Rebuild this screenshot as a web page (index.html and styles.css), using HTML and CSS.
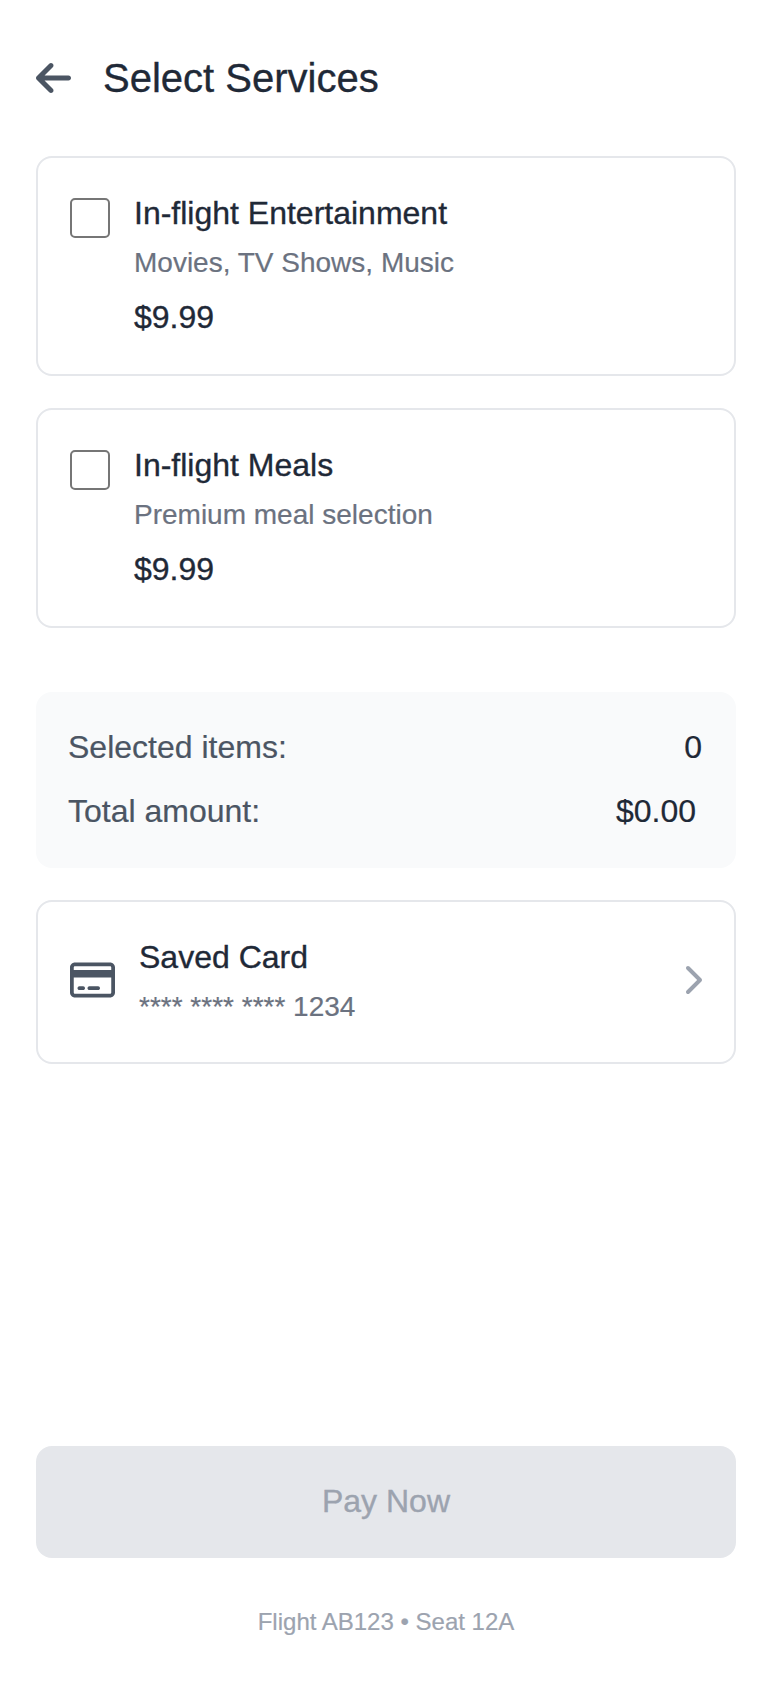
FILE: index.html
```html
<!DOCTYPE html>
<html lang="en">
<head>
<meta charset="utf-8">
<title>Select Services</title>
<link rel="stylesheet" href="styles.css">
</head>
<body>
<main class="screen">
  <header class="header">
    <svg class="icon-back" viewBox="0 0 448 512"><path d="M9.4 233.4c-12.5 12.5-12.5 32.8 0 45.3l160 160c12.5 12.5 32.8 12.5 45.3 0s12.5-32.8 0-45.3L109.2 288 416 288c17.7 0 32-14.3 32-32s-14.3-32-32-32l-306.7 0L214.6 118.6c12.5-12.5 12.5-32.8 0-45.3s-32.8-12.5-45.3 0l-160 160z"/></svg>
    <h1 class="heading">Select Services</h1>
  </header>
  <section class="services">
    <label class="card service">
      <input class="check" type="checkbox">
      <span class="info">
        <span class="title">In-flight Entertainment</span>
        <span class="sub">Movies, TV Shows, Music</span>
        <span class="price">$9.99</span>
      </span>
    </label>
    <label class="card service">
      <input class="check" type="checkbox">
      <span class="info">
        <span class="title">In-flight Meals</span>
        <span class="sub">Premium meal selection</span>
        <span class="price">$9.99</span>
      </span>
    </label>
  </section>
  <section class="summary">
    <div class="row"><span>Selected items:</span><span class="value count">0</span></div>
    <div class="row"><span>Total amount:</span><span class="value amount">$0.00</span></div>
  </section>
  <section class="card saved">
    <svg class="icon-card" viewBox="0 0 576 512"><path d="M512 80c8.8 0 16 7.2 16 16v32H48V96c0-8.8 7.2-16 16-16H512zm16 144V416c0 8.8-7.2 16-16 16H64c-8.8 0-16-7.2-16-16V224H528zM64 32C28.7 32 0 60.7 0 96V416c0 35.3 28.7 64 64 64H512c35.3 0 64-28.7 64-64V96c0-35.3-28.7-64-64-64H64zm56 304c-13.3 0-24 10.7-24 24s10.7 24 24 24h48c13.3 0 24-10.7 24-24s-10.7-24-24-24H120zm128 0c-13.3 0-24 10.7-24 24s10.7 24 24 24H360c13.3 0 24-10.7 24-24s-10.7-24-24-24H248z"/></svg>
    <div class="info">
      <span class="title">Saved Card</span>
      <span class="sub">**** **** **** 1234</span>
    </div>
    <svg class="icon-next" viewBox="0 0 320 512"><path d="M310.6 233.4c12.5 12.5 12.5 32.8 0 45.3l-192 192c-12.5 12.5-32.8 12.5-45.3 0s-12.5-32.8 0-45.3L242.7 256 73.4 86.6c-12.5-12.5-12.5-32.8 0-45.3s32.8-12.5 45.3 0l192 192z"/></svg>
  </section>
  <footer class="footer">
    <button class="pay" disabled>Pay Now</button>
    <p class="flight">Flight AB123 • Seat 12A</p>
  </footer>
</main>
</body>
</html>
```
FILE: styles.css
```css
* { box-sizing: border-box; }
body {
  margin: 0;
  background: #fff;
  color: #1f2937;
  font-family: "Liberation Sans", Arial, sans-serif;
  font-size: 32px;
  line-height: 46px;
  -webkit-text-stroke: 0.35px currentColor;
}
.screen {
  display: flex;
  flex-direction: column;
  width: 764px;
  height: 1682px;
  padding: 50px 28px 44px 36px;
}
.header { display: flex; align-items: center; gap: 32px; height: 56px; }
.icon-back { width: 35px; height: 40px; fill: #4b5563; }
.heading { margin: 0; font-size: 40px; font-weight: 400; line-height: 56px; }
.services { display: flex; flex-direction: column; gap: 32px; margin-top: 50px; }
.card { display: flex; width: 700px; border: 2px solid #e5e7eb; border-radius: 16px; }
.service { height: 220px; padding: 32px; gap: 24px; }
.check {
  appearance: none;
  flex: none;
  width: 40px;
  height: 40px;
  margin: 8px 0 0;
  border: 2px solid #767676;
  border-radius: 5px;
  background: #fff;
}
.info { display: flex; flex-direction: column; }
.sub {
  margin-top: 7px;
  color: #6b7280;
  font-size: 28px;
  line-height: 40px;
  -webkit-text-stroke: 0.2px #6b7280;
}
.price { margin-top: 11px; }
.summary {
  display: flex;
  flex-direction: column;
  gap: 18px;
  width: 700px;
  height: 176px;
  margin-top: 64px;
  padding: 32px;
  border-radius: 16px;
  background: #f9fafb;
  color: #4b5563;
  -webkit-text-stroke: 0.2px currentColor;
}
.row { display: flex; justify-content: space-between; }
.value { color: #1f2937; }
.count { margin-right: 2px; }
.amount { margin-right: 8px; }
.saved { align-items: center; height: 164px; margin-top: 32px; padding: 32px 32px 36px; }
.saved .sub { margin-bottom: -1px; }
.icon-card { width: 45px; height: 40px; margin-right: 24px; fill: #4b5563; }
.icon-next { width: 20px; height: 32px; margin-left: auto; fill: #9ca3af; }
.footer { width: 700px; margin-top: auto; }
.pay {
  display: block;
  width: 100%;
  height: 112px;
  padding: 0 0 2px;
  border: 0;
  border-radius: 16px;
  background: #e5e7eb;
  color: #9ca3af;
  font: inherit;
  -webkit-text-stroke: 0.35px #9ca3af;
}
.flight {
  margin: 48px 0 0;
  color: #9ca3af;
  font-size: 24px;
  line-height: 32px;
  text-align: center;
  -webkit-text-stroke: 0.2px #9ca3af;
}
```
